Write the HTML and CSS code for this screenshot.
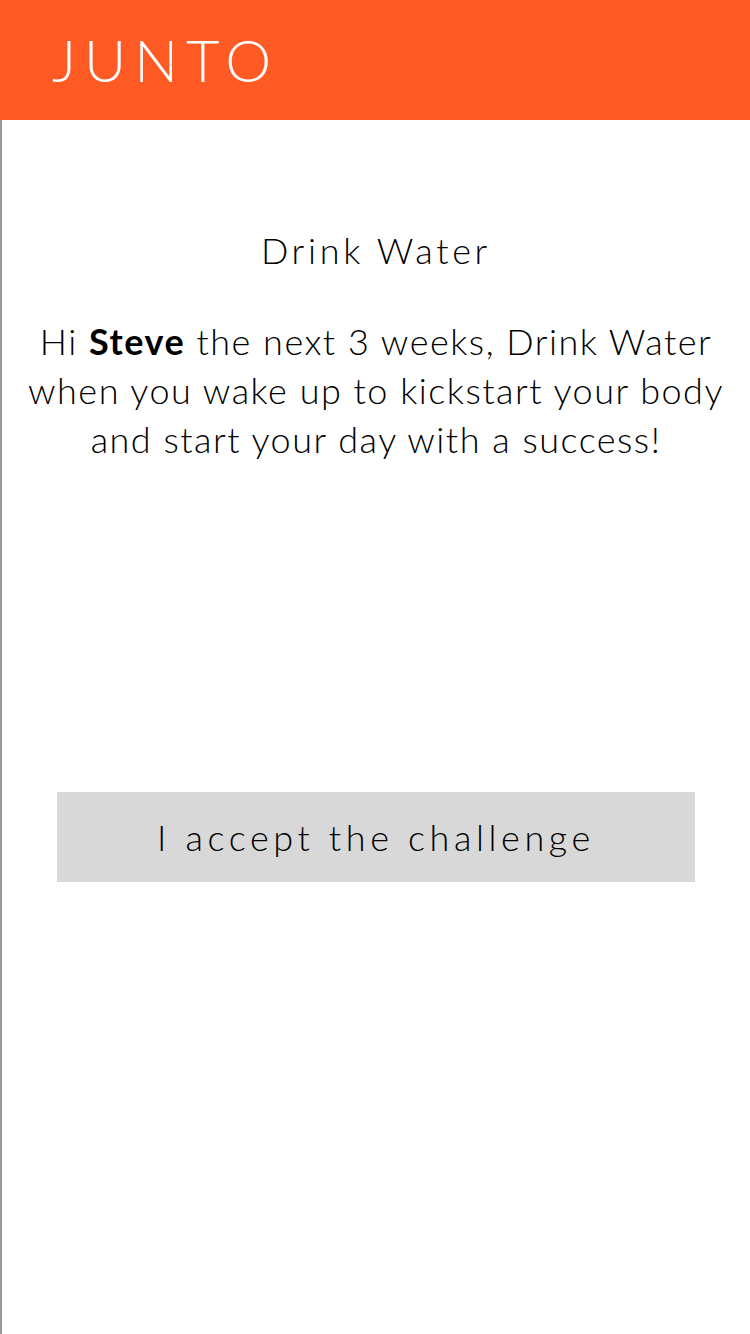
FILE: index.html
```html
<!DOCTYPE html>
<html>
<head>
<meta charset="utf-8">
<link rel="stylesheet" href="styles.css">
</head>
<body>
<header class="topbar"><span class="brand">JUNTO</span></header>
<main class="content">
  <h1 class="title">Drink Water</h1>
  <p class="message">Hi <strong>Steve</strong> the next 3 weeks, Drink Water when you wake up to kickstart your body and start your day with a success!</p>
  <div class="actions"><button class="accept">I accept the challenge</button></div>
</main>
</body>
</html>
```
FILE: styles.css
```css
html, body { margin: 0; padding: 0; height: 100%; }
body { font-family: "Lato", "Open Sans", sans-serif; font-weight: 300; color: #000; background: #fff; display: flex; flex-direction: column; }
.topbar { height: 120px; background: #ff5a23; display: flex; align-items: center; padding-left: 52px; flex-shrink: 0; }
.brand { color: #fff; font-size: 58px; letter-spacing: 8px; font-weight: 300; line-height: 1; }
.content { flex: 1; border-left: 2px solid #999; display: flex; flex-direction: column; align-items: center; }
.title { margin: 110px 0 0; font-size: 36px; font-weight: 300; letter-spacing: 3.7px; line-height: 40px; }
.message { margin: 47px 0 0; font-size: 36px; line-height: 49px; text-align: center; padding: 0 10px; letter-spacing: 1.5px; }
.message strong { font-weight: 700; }
.actions { margin-top: 328px; }
.accept { width: 638px; height: 90px; border: none; background: #d8d8d8; font-family: inherit; font-weight: 300; font-size: 36px; letter-spacing: 4.6px; color: #000; padding: 0; }
```
